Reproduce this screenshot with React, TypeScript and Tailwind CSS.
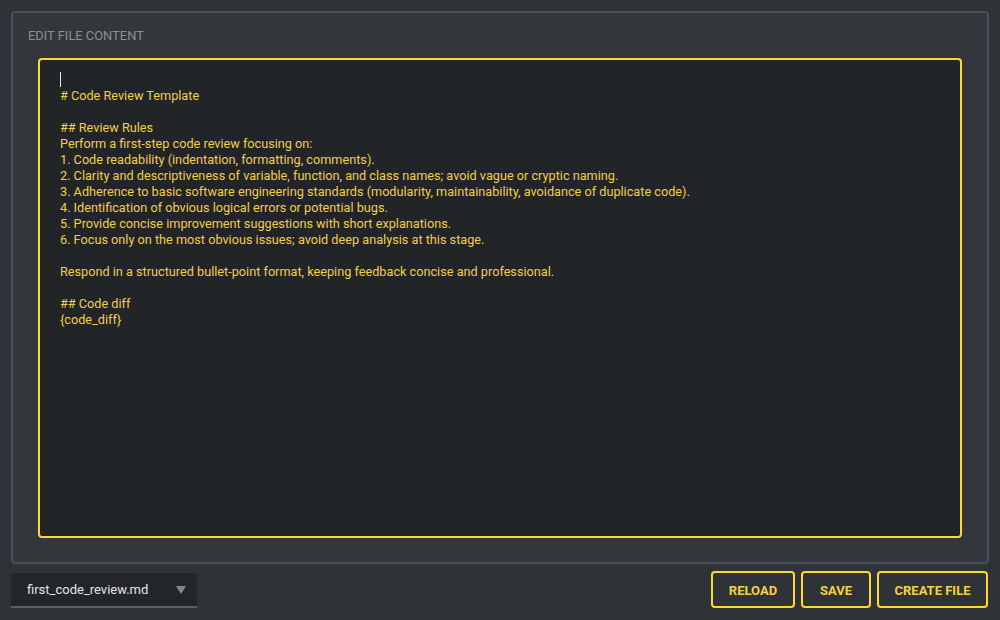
const lines = [
  "",
  "# Code Review Template",
  "",
  "## Review Rules",
  "Perform a first-step code review focusing on:",
  "1. Code readability (indentation, formatting, comments).",
  "2. Clarity and descriptiveness of variable, function, and class names; avoid vague or cryptic naming.",
  "3. Adherence to basic software engineering standards (modularity, maintainability, avoidance of duplicate code).",
  "4. Identification of obvious logical errors or potential bugs.",
  "5. Provide concise improvement suggestions with short explanations.",
  "6. Focus only on the most obvious issues; avoid deep analysis at this stage.",
  "",
  "Respond in a structured bullet-point format, keeping feedback concise and professional.",
  "",
  "## Code diff",
  "{code_diff}",
];

export default function App() {
  return (
    <div
      className="w-[1000px] h-[620px] bg-[#2f3337] flex flex-col px-[11px] pt-[11px] overflow-hidden"
      style={{ fontFamily: "Roboto, 'Noto Sans', sans-serif" }}
    >
      {/* Editor panel */}
      <section className="h-[553px] flex flex-col border-2 border-[#4a5058] rounded-[4px] bg-[#33373b] px-[15px] pt-[14px] pb-[24px]">
        <h2 className="text-[12.9px] leading-[18px] uppercase text-[#8b9095]">
          Edit File Content
        </h2>

        <div className="mx-[10px] mt-[13px] flex-1 border-2 border-[#fdd835] rounded-[4px] bg-[#222528] pl-[20px] pt-[12px]">
          {lines.map((line, i) => (
            <div key={i} className="h-[16px] text-[12.7px] leading-[16px] text-[#f2cf45] whitespace-pre">
              {i === 0 ? <span className="inline-block w-px h-[15px] bg-[#e8e8e8] align-top" /> : line}
            </div>
          ))}
        </div>
      </section>

      {/* Footer */}
      <div className="flex items-center justify-between mt-[7px]">
        <div className="w-[186px] h-[35px] mt-[2px] bg-[#232629] rounded-t-[4px] border-b-2 border-[#5c6064] flex items-center justify-between pl-[16px] pr-[11px]">
          <span className="text-[13px] text-[#e4e4e4] pt-[1px]">first_code_review.md</span>
          <svg width="10" height="8" viewBox="0 0 10 8" className="mt-[1px]">
            <path d="M0 0h10L5 8z" fill="#85888b" />
          </svg>
        </div>

        <div className="flex gap-[6px] mr-[1px]">
          {["Reload", "Save", "Create File"].map((label) => (
            <button
              key={label}
              className={
                "h-[37px] pt-[2px] border-2 border-[#fdd835] rounded-[4px] text-[13px] font-bold uppercase text-[#f5d23f] " +
                (label === "Reload" ? "w-[84px]" : label === "Save" ? "w-[70px]" : "w-[111px]")
              }
            >
              {label}
            </button>
          ))}
        </div>
      </div>
    </div>
  );
}
